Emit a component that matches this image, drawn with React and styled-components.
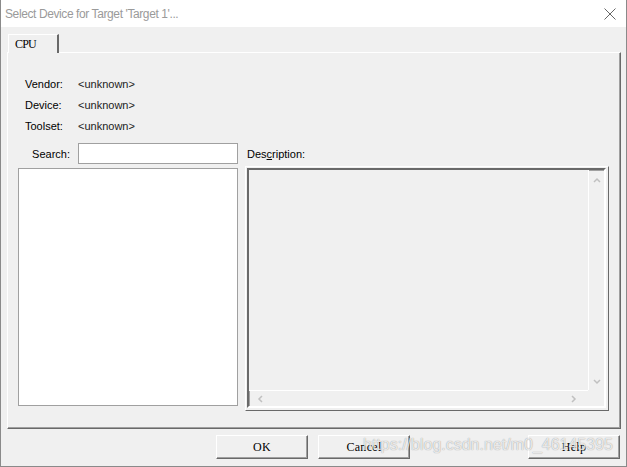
import styled, { createGlobalStyle } from 'styled-components'

const Global = createGlobalStyle`
  html, body {
    margin: 0;
    padding: 0;
    background: #f0f0f0;
  }
`

const Window = styled.div`
  position: relative;
  width: 627px;
  height: 467px;
  box-sizing: border-box;
  border: 1px solid #8a8a8a;
  border-top: none;
  background: #f0f0f0;
  display: flex;
  flex-direction: column;
  font-family: "Liberation Sans", Arial, sans-serif;
  font-size: 11px;
  color: #000;
  overflow: hidden;
`

const TitleBar = styled.div`
  height: 27px;
  background: #fff;
  display: flex;
  align-items: center;
  justify-content: space-between;
  padding: 0 10px 0 4px;
  flex-shrink: 0;
`

const Title = styled.span`
  font-size: 12px;
  color: #9a9a9a;
  letter-spacing: -0.4px;
`

const Body = styled.div`
  flex: 1;
  display: flex;
  flex-direction: column;
  padding: 6px 5px 0 6px;
`

const TabStrip = styled.div`
  height: 19px;
  display: flex;
  align-items: flex-end;
  padding-left: 1px;
`

const Tab = styled.div`
  width: 51px;
  height: 19px;
  box-sizing: border-box;
  border-top: 1px solid #fff;
  border-left: 1px solid #fff;
  border-right: 2px solid #696969;
  font-family: "Liberation Serif", "Times New Roman", serif;
  font-size: 12px;
  letter-spacing: -0.8px;
  padding: 2px 0 0 6px;
  margin-bottom: -1px;
  background: #f0f0f0;
  position: relative;
  z-index: 1;
`

const Panel = styled.div`
  height: 377px;
  box-sizing: border-box;
  border-top: 1px solid #fff;
  border-left: 1px solid #fff;
  border-right: 1px solid #696969;
  border-bottom: 1px solid #696969;
  box-shadow: inset -1px -1px 0 #a0a0a0;
  padding: 20px 0 0 10px;
  display: flex;
  flex-direction: column;
`

const InfoGrid = styled.div`
  display: grid;
  grid-template-columns: 53px auto;
  grid-auto-rows: 21px;
  align-items: center;
  padding-left: 7px;
  margin-bottom: 7px;
`

const Value = styled.span`
  color: #222;
`

const Main = styled.div`
  display: grid;
  grid-template-columns: 220px 363px;
  column-gap: 8px;
`

const SearchRow = styled.div`
  display: flex;
  align-items: center;
  height: 21px;
`

const SearchLabel = styled.span`
  width: 52px;
  text-align: right;
  margin-right: 8px;
`

const Input = styled.div`
  width: 160px;
  height: 21px;
  box-sizing: border-box;
  background: #fff;
  border: 1px solid #a0a0a0;
`

const DescLabel = styled.div`
  height: 21px;
  display: flex;
  align-items: center;
  padding-left: 1px;
  & u { text-decoration: underline; }
`

const List = styled.div`
  margin-top: 4px;
  height: 238px;
  box-sizing: border-box;
  background: #fff;
  border: 1px solid #a0a0a0;
`

const Frame = styled.div`
  margin-top: 2px;
  margin-left: -1px;
  height: 245px;
  box-sizing: border-box;
  border: 1px solid;
  border-color: #fff #696969 #696969 #fff;
  padding: 1px 2px 2px 1px;
  display: flex;
`

const Sunken = styled.div`
  flex: 1;
  box-sizing: border-box;
  border: 2px solid;
  border-color: #696969 #fff #fff #696969;
  box-shadow: inset 1px 1px 0 #a0a0a0;
  display: grid;
  grid-template-columns: 1fr 16px;
  grid-template-rows: 1fr 16px;
`

const Content = styled.div`
  background: #f0f0f0;
`

const VScroll = styled.div`
  border-left: 1px solid #fff;
  display: flex;
  flex-direction: column;
  justify-content: space-between;
  align-items: center;
  padding: 6px 0 4px;
`

const HScroll = styled.div`
  border-top: 1px solid #fff;
  display: flex;
  justify-content: space-between;
  align-items: center;
  padding: 0 10px 0 7px;
`

const Corner = styled.div`
  background: #f0f0f0;
`

const ButtonRow = styled.div`
  display: flex;
  align-items: center;
  padding: 6px 1px 0 209px;
  gap: 10px;
`

const Button = styled.div`
  width: 92px;
  height: 24px;
  box-sizing: border-box;
  border: 1px solid;
  border-color: #fff #696969 #696969 #fff;
  box-shadow: inset -1px -1px 0 #a0a0a0;
  display: flex;
  align-items: center;
  justify-content: center;
  font-family: "Liberation Serif", "Times New Roman", serif;
  font-size: 12px;
  letter-spacing: 0.3px;
  margin-left: ${p => (p.$push ? 'auto' : '0')};
`

const Watermark = styled.div`
  position: absolute;
  left: 362px;
  top: 436px;
  font-size: 16px;
  color: rgba(255, 255, 255, 0.8);
  text-shadow: 0 0 1px rgba(0, 0, 0, 0.45);
  pointer-events: none;
  white-space: nowrap;
`

const Arrow = ({ d }) => (
  <svg width="8" height="8" viewBox="0 0 8 8">
    <path d={d} fill="none" stroke="#c0c0c0" strokeWidth="1.5" />
  </svg>
)

const CloseIcon = () => (
  <svg width="12" height="12" viewBox="0 0 12 12">
    <path d="M0.5 0.5 L11.5 11.5 M11.5 0.5 L0.5 11.5" stroke="#666" strokeWidth="1" />
  </svg>
)

export default function App () {
  return (
    <>
      <Global />
      <Window>
        <TitleBar>
          <Title>Select Device for Target 'Target 1'...</Title>
          <CloseIcon />
        </TitleBar>
        <Body>
          <TabStrip>
            <Tab>CPU</Tab>
          </TabStrip>
          <Panel>
            <InfoGrid>
              <span>Vendor:</span><Value>&lt;unknown&gt;</Value>
              <span>Device:</span><Value>&lt;unknown&gt;</Value>
              <span>Toolset:</span><Value>&lt;unknown&gt;</Value>
            </InfoGrid>
            <Main>
              <SearchRow>
                <SearchLabel>Search:</SearchLabel>
                <Input />
              </SearchRow>
              <DescLabel>Des<u>c</u>ription:</DescLabel>
              <List />
              <Frame>
                <Sunken>
                  <Content />
                  <VScroll>
                    <Arrow d="M1 6 L4 3 L7 6" />
                    <Arrow d="M1 2 L4 5 L7 2" />
                  </VScroll>
                  <HScroll>
                    <Arrow d="M6 1 L3 4 L6 7" />
                    <Arrow d="M2 1 L5 4 L2 7" />
                  </HScroll>
                  <Corner />
                </Sunken>
              </Frame>
            </Main>
          </Panel>
          <ButtonRow>
            <Button>OK</Button>
            <Button>Cancel</Button>
            <Button $push>Help</Button>
          </ButtonRow>
        </Body>
        <Watermark>https://blog.csdn.net/m0_46145395</Watermark>
      </Window>
    </>
  )
}
